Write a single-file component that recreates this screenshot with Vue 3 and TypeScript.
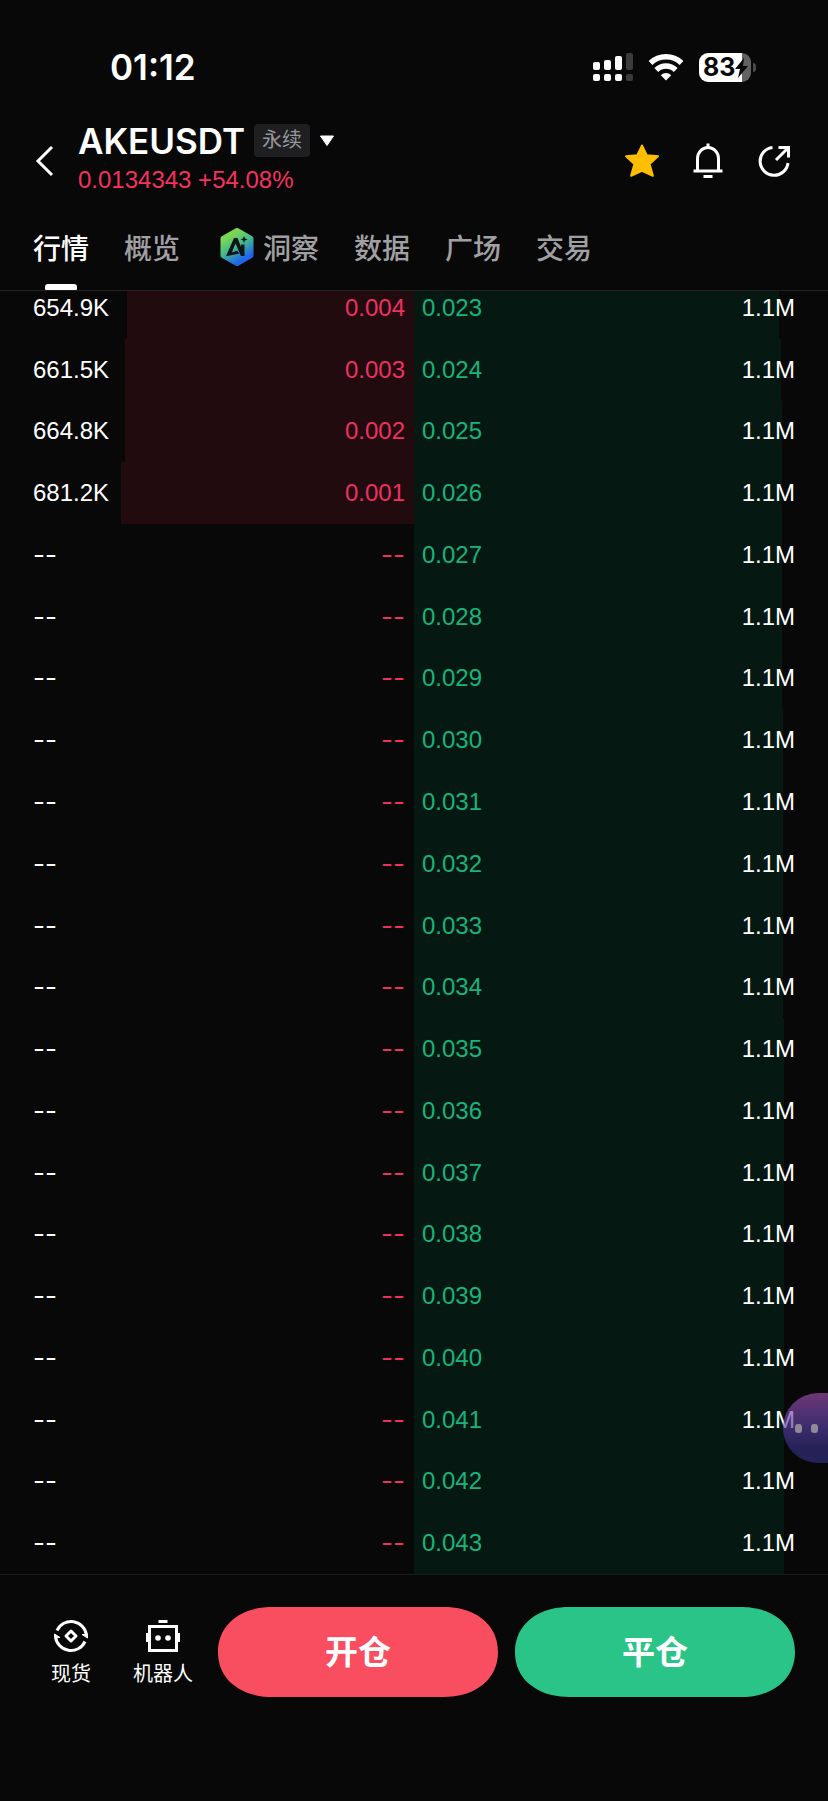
<script setup lang="ts">
import { ref } from 'vue'

interface Level {
  bidQty: string
  bid: string
  bidDepth: number
  ask: string
  askQty: string
  askDepth: number
}

const bids: [string, string, number][] = [
  ['654.9K', '0.004', 69.3],
  ['661.5K', '0.003', 69.8],
  ['664.8K', '0.002', 69.8],
  ['681.2K', '0.001', 70.8],
]

const levels: Level[] = Array.from({ length: 21 }, (_, i) => {
  const bid = bids[i]
  return {
    bidQty: bid ? bid[0] : '--',
    bid: bid ? bid[1] : '--',
    bidDepth: bid ? bid[2] : 0,
    ask: (0.023 + i * 0.001).toFixed(3),
    askQty: '1.1M',
    askDepth: i === 0 ? 88.2 : Math.min(89.4, 88.7 + i * 0.05),
  }
})

const tabs = ['行情', '概览', '洞察', '数据', '广场', '交易']
const active = ref('行情')
</script>

<template>
  <div class="page">
    <div class="status">
      <span class="clock">01:12</span>
      <div class="status-icons">
        <svg width="40" height="28" viewBox="0 0 40 28" fill="#fff">
          <rect x="0" y="9" width="7" height="8" rx="2" />
          <rect x="11" y="7" width="7" height="10" rx="2" />
          <rect x="22" y="3" width="7" height="14" rx="2" />
          <rect x="0" y="21" width="7" height="7" rx="2" />
          <rect x="11" y="21" width="7" height="7" rx="2" />
          <rect x="22" y="21" width="7" height="7" rx="2" />
          <g fill="#3b3b3b">
            <rect x="33" y="0" width="7" height="17" rx="2" />
            <rect x="33" y="21" width="7" height="7" rx="2" />
          </g>
        </svg>
        <svg width="36" height="28" viewBox="0 0 36 28">
          <g fill="none" stroke="#fff" stroke-width="5.500">
            <path d="M2.500 10a22.500 22.500 0 0 1 31 0" />
            <path d="M8.300 17a14 14 0 0 1 19.400 0" />
          </g>
          <path d="M18 27.500l-5.200-5.300a7.500 7.500 0 0 1 10.400 0z" fill="#fff" />
        </svg>
        <div class="battery">
          <span class="battery-level">83</span>
          <svg class="bolt" width="13" height="20" viewBox="0 0 13 20">
            <path d="M9 0L0 11h5L3 20l10-12H8z" fill="#080808" />
          </svg>
          <i class="nub"></i>
        </div>
      </div>
    </div>

    <header class="header">
      <button class="icon-btn back" aria-label="返回">
        <svg width="20" height="34" viewBox="0 0 20 34" fill="none" stroke="#fff" stroke-width="3">
          <path d="M18 3L4 17l14 14" />
        </svg>
      </button>
      <div class="pair">
        <div class="pair-line">
          <h1>AKEUSDT</h1>
          <span class="tag">永续</span>
          <button class="icon-btn" aria-label="切换">
            <svg width="16" height="12" viewBox="0 0 16 12"><path d="M1.500 1h13L8 10.500z" fill="#fff" stroke="#fff" stroke-linejoin="round" /></svg>
          </button>
        </div>
        <div class="price">0.0134343 +54.08%</div>
      </div>
      <div class="actions">
        <button class="icon-btn" aria-label="收藏">
          <svg width="36" height="36" viewBox="0 0 36 36">
            <path d="M18 2.500l4.700 9.800 11.300 1-8.400 7.800 3.300 11.700L18 27.800 7.100 32.800l3.300-11.700L2 13.300l11.300-1z" fill="#ffbe00" stroke="#ffbe00" stroke-width="2" stroke-linejoin="round" />
          </svg>
        </button>
        <button class="icon-btn" aria-label="提醒">
          <svg width="36" height="36" viewBox="0 0 36 36" fill="none" stroke="#fff" stroke-width="3">
            <path d="M7.500 28V15.500a10.500 11 0 0 1 21 0V28" />
            <path d="M3.500 28h29M13.500 33.500h9M18 .500v5" />
          </svg>
        </button>
        <button class="icon-btn" aria-label="分享">
          <svg width="36" height="36" viewBox="0 0 36 36" fill="none" stroke="#fff" stroke-width="3">
            <path d="M16.500 4.400A14 14 0 1 0 32 20" />
            <path d="M20 17L31.500 5.500M22.500 4.500h10v10" />
          </svg>
        </button>
      </div>
    </header>

    <nav class="tabs">
      <button
        v-for="tab in tabs"
        :key="tab"
        class="tab"
        :class="{ active: tab === active, insight: tab === '洞察' }"
        @click="active = tab"
      >
        <svg v-if="tab === '洞察'" width="36" height="40" viewBox="0 0 36 40">
          <defs>
            <linearGradient id="hex" x1="0.200" y1="0" x2="0.700" y2="1">
              <stop offset="0.150" stop-color="#7ad653" />
              <stop offset="0.500" stop-color="#43b98e" />
              <stop offset="0.900" stop-color="#2166ea" />
            </linearGradient>
          </defs>
          <path d="M18 3.500l14 8v17L18 36.500 4 28.500v-17z" fill="url(#hex)" stroke="url(#hex)" stroke-width="5" stroke-linejoin="round" />
          <g fill="#0b1614">
            <path d="M15 11H18.500L24 25v4H22L16.500 16.500 12.800 25.500 18 23.800l2.500 2.700-13.500 2.700z" />
            <path d="M22 17.500h3.500V29H22z" />
            <path d="M25 9l1 2.500 2.500 1-2.500 1-1 2.500-1-2.500-2.500-1 2.500-1z" />
          </g>
        </svg>
        <span>{{ tab }}</span>
      </button>
    </nav>

    <main class="book">
      <div class="levels">
        <div v-for="level in levels" :key="level.ask" class="level">
          <div class="side bid">
            <i class="depth" :style="{ width: level.bidDepth + '%' }"></i>
            <span class="qty" :class="{ empty: !level.bidDepth }">{{ level.bidQty }}</span>
            <span class="px" :class="{ empty: !level.bidDepth }">{{ level.bid }}</span>
          </div>
          <div class="side ask">
            <i class="depth" :style="{ width: level.askDepth + '%' }"></i>
            <span class="px">{{ level.ask }}</span>
            <span class="qty">{{ level.askQty }}</span>
          </div>
        </div>
      </div>
      <button class="assistant" aria-label="助手"><i></i><i></i></button>
    </main>

    <footer class="footer">
      <button class="shortcut spot">
        <svg width="36" height="36" viewBox="0 0 36 36" fill="none" stroke="#fff" stroke-width="3">
          <path d="M4 12.500A15.500 15.500 0 0 1 33.500 17.500" />
          <path d="M32 23.500A15.500 15.500 0 0 1 2.500 18.500" />
          <path d="M29 16.500h5.500V20zM7 19.500H1.500V16z" fill="#fff" stroke-width="1" />
          <path d="M18 13l5 5-5 5-5-5z" stroke-linejoin="round" />
        </svg>
        <span>现货</span>
      </button>
      <button class="shortcut bot">
        <svg width="36" height="36" viewBox="0 0 36 36" fill="none" stroke="#fff" stroke-width="3">
          <path d="M4.500 8.500h27v24h-27zM13.500 3.500h9" />
          <path d="M2.500 15v9M33.500 15v9" />
          <g fill="#fff" stroke="none"><circle cx="13" cy="20" r="2.800" /><circle cx="23" cy="20" r="2.800" /></g>
        </svg>
        <span>机器人</span>
      </button>
      <button class="trade open">开仓</button>
      <button class="trade close">平仓</button>
    </footer>
  </div>
</template>

<style>
body {
  margin: 0;
  background: #080808;
}
</style>

<style scoped>
.page {
  display: flex;
  flex-direction: column;
  min-height: 100vh;
  box-sizing: border-box;
  background: #080808;
  color: #fff;
  font-family: "Liberation Sans", "Noto Sans CJK SC", sans-serif;
}

button {
  padding: 0;
  border: 0;
  background: none;
  color: inherit;
  font-family: inherit;
  cursor: pointer;
}

svg {
  display: block;
  flex: none;
}

.status {
  display: flex;
  align-items: center;
  justify-content: space-between;
  height: 46px;
  padding: 44px 77px 0 110px;
}

.clock {
  font: 600 35px/46px Inter, sans-serif;
}

.status-icons {
  display: flex;
  align-items: center;
  gap: 15px;
}

.battery {
  position: relative;
  display: flex;
  align-items: center;
  width: 52px;
  height: 29px;
  border-radius: 9px;
  background: linear-gradient(90deg, #fff 83%, #616161 83%);
}

.battery-level {
  padding-left: 4px;
  color: #080808;
  font: 700 25px/29px Inter, sans-serif;
}

.bolt {
  position: absolute;
  right: 3px;
  top: 5px;
}

.nub {
  position: absolute;
  right: -5px;
  top: 10px;
  width: 3px;
  height: 9px;
  border-radius: 0 3px 3px 0;
  background: #4a4a4a;
}

.header {
  display: flex;
  align-items: center;
  height: 78px;
  padding: 32px 36px 0 34px;
}

.back {
  margin-right: 24px;
}

.icon-btn {
  display: block;
}

.pair {
  display: flex;
  flex-direction: column;
  gap: 3px;
}

.pair-line {
  display: flex;
  align-items: center;
  gap: 9px;
  height: 34px;
}

h1 {
  margin: 0;
  font: 600 35px/34px Inter, sans-serif;
}

.tag {
  padding: 0 8px;
  border-radius: 4px;
  background: #1f1f21;
  color: #96979b;
  font-size: 20px;
  line-height: 33px;
}

.price {
  color: #f5325f;
  font-size: 24px;
  line-height: 38px;
}

.actions {
  display: flex;
  gap: 30px;
  margin-left: auto;
}

.tabs {
  display: flex;
  gap: 35px;
  height: 90px;
  padding: 0 33px;
  border-bottom: 1px solid #202020;
}

.tab {
  position: relative;
  display: flex;
  align-items: center;
  gap: 8px;
  height: 90px;
  padding-top: 3px;
  box-sizing: border-box;
  color: #a0a0a4;
  font-size: 28px;
  font-weight: 500;
}

.insight {
  padding-left: 4px;
}

.tab.active {
  color: #fff;
}

.tab.active::after {
  content: "";
  position: absolute;
  left: 12px;
  right: 12px;
  bottom: 0;
  height: 6px;
  border-radius: 3px 3px 1px 1px;
  background: #fff;
}

.book {
  position: relative;
  display: flex;
  flex: 1;
  overflow: hidden;
}

.levels {
  display: flex;
  flex: 1;
  flex-direction: column;
  margin-top: -14px;
}

.level {
  display: flex;
  flex: 1;
  min-height: 48px;
}

.side {
  position: relative;
  display: flex;
  flex: none;
  width: 50%;
  box-sizing: border-box;
  align-items: center;
  justify-content: space-between;
  font-size: 24px;
}

.side span {
  position: relative;
}

.bid {
  padding: 0 9px 0 33px;
}

.ask {
  padding: 0 33px 0 8px;
}

.depth {
  position: absolute;
  top: 0;
  bottom: 0;
}

.bid .depth {
  right: 0;
  background: #220b0f;
}

.ask .depth {
  left: 0;
  background: #051912;
}

.bid .px {
  color: #ee3160;
}

.ask .px {
  color: #19b37b;
}

.side .empty {
  font: 400 26px/28px Inter, sans-serif;
}

.assistant {
  position: absolute;
  right: 0;
  bottom: 111px;
  display: flex;
  align-items: center;
  gap: 9px;
  width: 45px;
  height: 70px;
  padding-left: 12px;
  border-radius: 35px 0 0 35px;
  background: linear-gradient(#a550aea6, #5c42a8a6 45%, #333080a6 80%);
}

.assistant i {
  width: 7px;
  height: 9px;
  border-radius: 3px;
  background: #918996;
}

.footer {
  display: flex;
  align-items: flex-start;
  padding: 32px 33px 104px;
  border-top: 1px solid #1a1a1a;
}

.shortcut {
  display: flex;
  flex: none;
  flex-direction: column;
  align-items: center;
  gap: 4px;
  padding-top: 11px;
  font-size: 20px;
  line-height: 32px;
}

.spot {
  width: 76px;
}

.bot {
  width: 76px;
  margin: 0 17px 0 16px;
}

.trade {
  flex: 1;
  height: 90px;
  padding-bottom: 4px;
  border-radius: 48px / 45px;
  font-size: 33px;
  font-weight: 700;
}

@supports (corner-shape: superellipse(1.1)) {
  .trade {
    border-radius: 54px / 45px;
    corner-shape: superellipse(1.1);
  }
}

.open {
  background: #f94d60;
}

.close {
  margin-left: 17px;
  background: #2bc488;
}
</style>
